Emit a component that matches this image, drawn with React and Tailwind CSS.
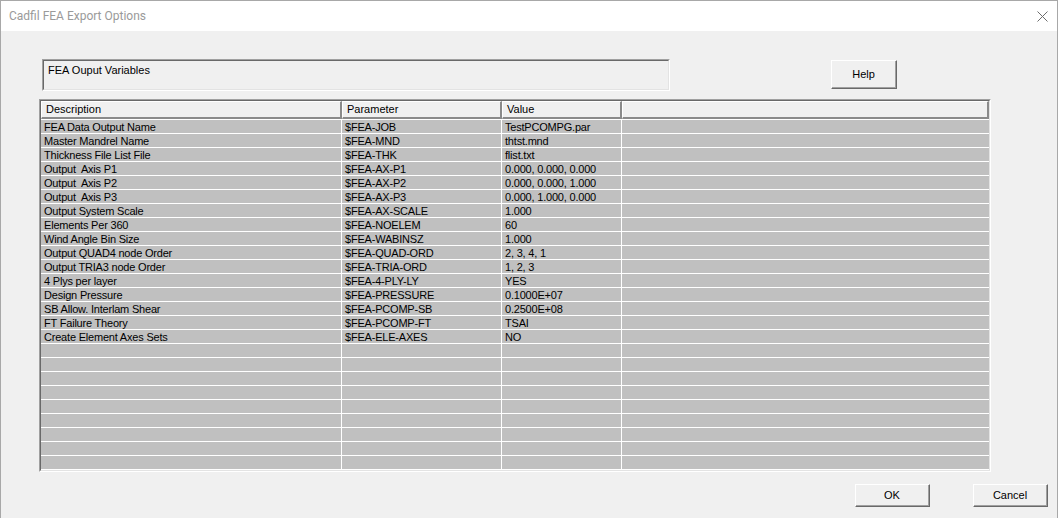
import React from 'react';

const rows = [
  ['FEA Data Output Name', '$FEA-JOB', 'TestPCOMPG.par'],
  ['Master Mandrel Name', '$FEA-MND', 'thtst.mnd'],
  ['Thickness File List File', '$FEA-THK', 'flist.txt'],
  ['Output  Axis P1', '$FEA-AX-P1', '0.000, 0.000, 0.000'],
  ['Output  Axis P2', '$FEA-AX-P2', '0.000, 0.000, 1.000'],
  ['Output  Axis P3', '$FEA-AX-P3', '0.000, 1.000, 0.000'],
  ['Output System Scale', '$FEA-AX-SCALE', '1.000'],
  ['Elements Per 360', '$FEA-NOELEM', '60'],
  ['Wind Angle Bin Size', '$FEA-WABINSZ', '1.000'],
  ['Output QUAD4 node Order', '$FEA-QUAD-ORD', '2, 3, 4, 1'],
  ['Output TRIA3 node Order', '$FEA-TRIA-ORD', '1, 2, 3'],
  ['4 Plys per layer', '$FEA-4-PLY-LY', 'YES'],
  ['Design Pressure', '$FEA-PRESSURE', '0.1000E+07'],
  ['SB Allow. Interlam Shear', '$FEA-PCOMP-SB', '0.2500E+08'],
  ['FT Failure Theory', '$FEA-PCOMP-FT', 'TSAI'],
  ['Create Element Axes Sets', '$FEA-ELE-AXES', 'NO'],
];

// pad out with blank rows to fill the grid
const allRows = [...rows, ...Array.from({ length: 10 }, () => ['', '', ''])];

const WinButton = ({ label, className = '' }) => (
  <button
    className={`h-[23px] w-[75px] border-t border-l border-white border-r border-b border-r-[#696969] border-b-[#696969] bg-[#f0f0f0] text-[11px] text-black ${className}`}
  >
    <div className="flex h-full w-full items-center justify-center border-r border-b border-[#a0a0a0]">
      {label}
    </div>
  </button>
);

const HeaderCell = ({ label, className = '' }) => (
  <div
    className={`flex h-[18px] items-center border-t border-l border-white border-r-2 border-b-2 border-r-[#8a8a8a] border-b-[#8a8a8a] bg-[#f0f0f0] pl-[4px] ${className}`}
  >
    {label}
  </div>
);

export default function App() {
  return (
    <div
      className="relative h-[518px] w-[1058px] overflow-hidden border-x border-t border-[#a8a8a8] bg-[#f0f0f0] text-[11px] text-black"
      style={{ fontFamily: '"Liberation Sans", Arial, sans-serif' }}
    >
      {/* title bar */}
      <div className="flex h-[30px] items-center justify-between bg-white pl-[8px] pr-[9px]">
        <span
          className="text-[12px] text-[#9a9a9a]"
          style={{ fontFamily: '"Segoe UI", Roboto, "Noto Sans", sans-serif' }}
        >
          Cadfil FEA Export Options
        </span>
        <svg width="11" height="11" viewBox="0 0 11 11">
          <path d="M0.5 0.5 L10.5 10.5 M10.5 0.5 L0.5 10.5" stroke="#6d6d6d" strokeWidth="1" fill="none" />
        </svg>
      </div>

      {/* top row */}
      <div className="flex items-start pt-[28px]">
        <div className="ml-[41px] h-[32px] w-[628px] border-t border-l border-[#a0a0a0] border-r border-b border-r-white border-b-white">
          <div className="h-full w-full border-t border-l border-[#696969] border-r border-b border-r-[#e3e3e3] border-b-[#e3e3e3] pl-[4px] pt-[1px]">
            FEA Ouput Variables
          </div>
        </div>
        <WinButton label="Help" className="ml-[161px] mt-[1px] !h-[29px] !w-[66px]" />
      </div>

      {/* table */}
      <div className="ml-[38px] mt-[8px] h-[373px] w-[952px] border-t border-l border-[#a0a0a0] border-r border-b border-r-white border-b-white">
        <div className="h-full w-full overflow-hidden border-t border-l border-[#696969] border-r border-b border-r-[#e3e3e3] border-b-[#e3e3e3] bg-[#c0c0c0]">
          <div className="flex">
            <HeaderCell label="Description" className="w-[301px]" />
            <HeaderCell label="Parameter" className="w-[160px]" />
            <HeaderCell label="Value" className="w-[120px]" />
            <HeaderCell label="" className="flex-1" />
          </div>
          {allRows.map((r, i) => (
            <div key={i} className="flex h-[14px] border-t border-white leading-[13px] tracking-[-0.2px]">
              <div className="w-[301px] whitespace-pre border-r border-white pl-[3px] pt-[1px]">{r[0]}</div>
              <div className="w-[160px] whitespace-pre border-r border-white pl-[3px] pt-[1px]">{r[1]}</div>
              <div className="w-[120px] whitespace-pre border-r border-white pl-[3px] pt-[1px]">{r[2]}</div>
              <div className="flex-1"></div>
            </div>
          ))}
        </div>
      </div>

      {/* bottom buttons */}
      <div className="mt-[12px] flex">
        <WinButton label="OK" className="ml-[854px]" />
        <WinButton label="Cancel" className="ml-[43px]" />
      </div>
    </div>
  );
}
